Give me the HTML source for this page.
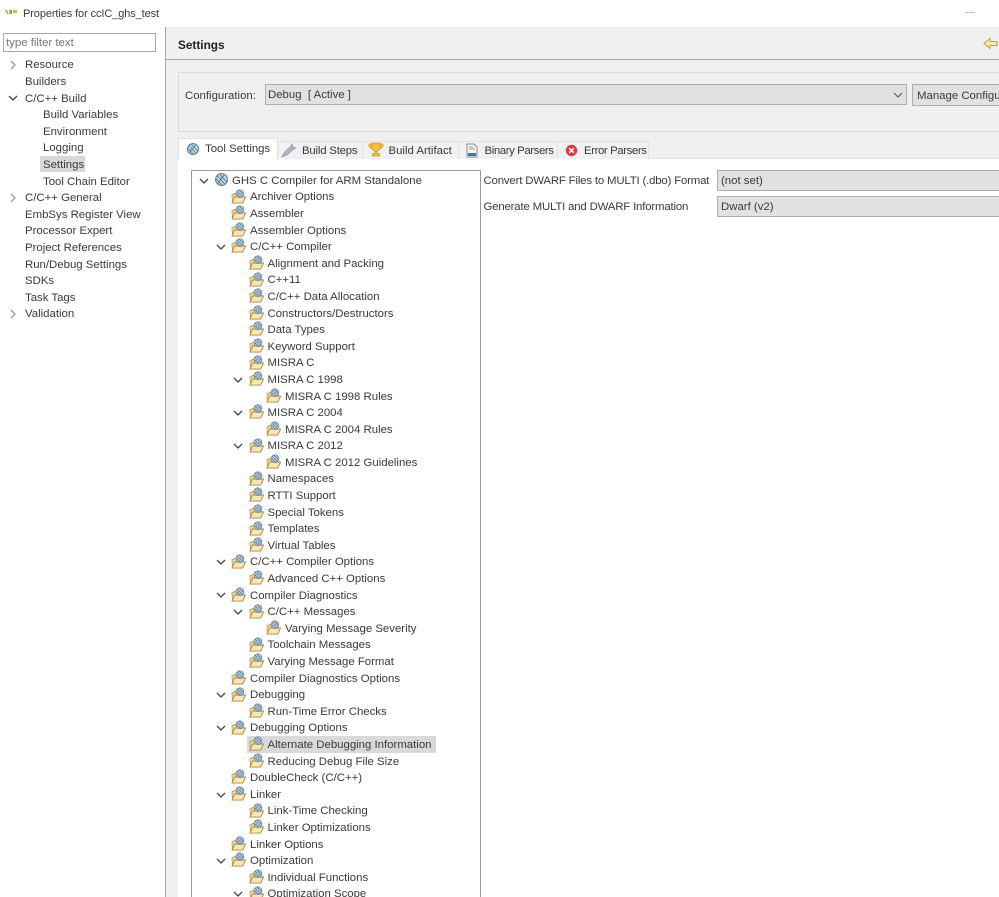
<!DOCTYPE html>
<html><head><meta charset="utf-8"><title>Properties for ccIC_ghs_test</title>
<style>
html,body{margin:0;padding:0;width:999px;height:897px;overflow:hidden;background:#fff}
body{position:relative;font:11.4px/16.6px "Liberation Sans","Noto Sans CJK KR",sans-serif;color:#3a3a3a}
.a{position:absolute;white-space:nowrap}
.tree{position:absolute;left:192px;top:172.1px;width:288px;height:726px;overflow:hidden}
.r{position:relative;height:16.6px;white-space:nowrap}
.r svg{position:absolute}
.r svg.i{top:0;width:15px;height:15px}
.r svg.c{top:3.500px;width:10px;height:10px}
.r span{position:absolute;top:.7px}
.l0 svg.c{left:7px}.l0 svg.i{left:22px}.l0 span{left:40px}
.l1 svg.c{left:24px}.l1 svg.i{left:39px}.l1 span{left:58px}
.l2 svg.c{left:41px}.l2 svg.i{left:57px}.l2 span{left:75.5px}
.l3 svg.i{left:74px}.l3 span{left:93px}
.sel{position:absolute;left:247px;top:736px;width:189px;height:17px;background:#d9d9d9}
.left{position:absolute;left:0;top:56.800px;width:165px}
.left div{position:relative;height:16.6px;white-space:nowrap}
.left span{position:absolute;top:.6px}
.left .t1 span{left:25px}.left .t2 span{left:43px}
.left svg{position:absolute;left:8px;top:3.500px;width:10px;height:10px}
.tab{position:absolute;top:141px;height:17px;background:#f1f1f1;border:1px solid #e3e3e3;border-bottom:0;line-height:17px;white-space:nowrap}
.tab svg{position:absolute;top:0}
.tab span{position:absolute;top:1px}
.combo{position:absolute;background:#e1e1e1;border:1px solid #adadad;box-sizing:border-box;line-height:21px;white-space:nowrap;overflow:hidden}
</style></head><body>
<svg width="0" height="0" style="position:absolute"><defs>
<symbol id="f" viewBox="0 0 16 16">
<path d="M1 6h1.500l1-1.500H7V14H1.500z" fill="#efd596" stroke="#b8954a" stroke-width=".8"/>
<path d="M1 15l3-6.500h11.500l-3 6.500z" fill="#f9e6b4" stroke="#ad8a42" stroke-width="1"/>
<circle cx="9.500" cy="5" r="4.200" fill="#c7d3dc" stroke="#6f8ea5" stroke-width=".9"/>
<path d="M6.500 2.500l6 5.500M6 5l4.500 4M8.500 1l4.500 4.500" stroke="#54758e" stroke-width=".9" fill="none"/>
</symbol>
<symbol id="g" viewBox="0 0 16 16">
<circle cx="8" cy="8" r="6.300" fill="#cbd8e2" stroke="#5f859f" stroke-width="1.200"/>
<path d="M3.500 4l8 9M6 2.500l8 8.500M2.500 7.500l6 6.500M11 3l-7 9" stroke="#4f708a" stroke-width=".9" fill="none"/>
</symbol>
<symbol id="d" viewBox="0 0 10 10"><path d="M1 3l4 4 4-4" fill="none" stroke="#444" stroke-width="1.300"/></symbol>
<symbol id="n" viewBox="0 0 10 10"><path d="M3 1l4 4-4 4" fill="none" stroke="#999" stroke-width="1.300"/></symbol>
</defs></svg>

<!-- title bar -->
<svg class="a" style="left:5px;top:9px" width="12" height="6" viewBox="0 0 12 6"><path d="M0 1h2l2 4H2z" fill="#d8a82a"/><path d="M4 1h3v4H5z" fill="#8a9a70"/><path d="M8 1h4v3H8z" fill="#c2c23a"/></svg>
<div class="a" style="left:23px;top:6px;font-size:11px;letter-spacing:-.1px">Properties for ccIC_ghs_test</div>
<div class="a" style="left:965px;top:12px;width:10px;height:1px;background:#bbb"></div>

<!-- right panel backgrounds -->
<div class="a" style="left:165px;top:27px;width:834px;height:870px;background:#f0f0f0"></div>
<div class="a" style="left:165px;top:27px;width:1px;height:870px;background:#a6a6a6"></div>
<div class="a" style="left:166px;top:59px;width:833px;height:1px;background:#a8a8a8"></div>
<div class="a" style="left:178px;top:72px;width:821px;height:60px;border:1px solid #dcdcdc;border-right:0;box-sizing:border-box"></div>
<div class="a" style="left:178px;top:158px;width:821px;height:739px;background:#fff"></div>
<div class="a" style="left:178px;top:158px;width:821px;height:1px;background:#e3e3e3"></div>

<b class="a" style="left:178px;top:37px;color:#222;font-size:11.8px">Settings</b>
<svg class="a" style="left:983px;top:37px" width="15" height="13" viewBox="0 0 15 13"><path d="M1 6.500L7 1.500v3h7v4H7v3z" fill="#fbeeb0" stroke="#c8a040" stroke-width="1.100"/></svg>

<!-- configuration -->
<div class="a" style="left:185px;top:88px">Configuration:</div>
<div class="combo" style="left:265px;top:84px;width:642px;height:21px;padding-left:2px">Debug &nbsp;[ Active ]
<svg style="position:absolute;right:3px;top:5px" width="10" height="10" viewBox="0 0 10 10"><path d="M1 3l4 4 4-4" fill="none" stroke="#555" stroke-width="1"/></svg></div>
<div class="combo" style="left:912px;top:84px;width:100px;height:22px;padding-left:4px;line-height:22px">Manage Configurations</div>

<!-- tabs -->
<div class="tab" style="left:178px;top:138px;width:98px;height:21px;background:#fff;border-color:#e3e3e3;line-height:20px;z-index:2">
<svg style="left:7px;top:3px" width="14" height="14"><use href="#g"/></svg><span style="left:26px;top:0">Tool Settings</span></div>
<div class="tab" style="left:277px;width:84px">
<svg style="left:3px;top:1px" width="16" height="15" viewBox="0 0 16 15"><path d="M1 14l2-4 3-3 4-4 1-2 1 3 3 1-2 1-4 3-3 3z" fill="#a9b8c4" stroke="#7b8b98" stroke-width=".6"/></svg><span style="left:24px;letter-spacing:-.2px">Build Steps</span></div>
<div class="tab" style="left:362px;width:95px">
<svg style="left:5px;top:0" width="16" height="15" viewBox="0 0 16 15"><path d="M4 1h8v5c0 2-2 3.500-4 3.500S4 8 4 6zM7 9h2v2.500h2.500V14h-7v-2.500H7zM4 2H1v2c0 1.500 1.500 2.500 3 2.500M12 2h3v2c0 1.500-1.500 2.500-3 2.500" fill="#f2bf45" stroke="#d09a20" stroke-width=".7"/></svg><span style="left:25.5px">Build Artifact</span></div>
<div class="tab" style="left:458px;width:98px">
<svg style="left:6px;top:1px" width="14" height="15" viewBox="0 0 14 15"><path d="M2 1h7l3 3v10H2z" fill="#f5f5f5" stroke="#8a8a8a"/><path d="M3 10h8v3H3z" fill="#3f6ea0"/><path d="M4 4h4M4 6h6" stroke="#999"/></svg><span style="left:25.500px;letter-spacing:-.4px">Binary Parsers</span></div>
<div class="tab" style="left:557px;width:90px">
<svg style="left:7px;top:2px" width="13" height="13" viewBox="0 0 13 13"><circle cx="6.500" cy="6.500" r="5.700" fill="#e2394a"/><path d="M4.300 4.300l4.400 4.400M8.700 4.300l-4.400 4.400" stroke="#fff" stroke-width="1.600"/></svg><span style="left:26px;letter-spacing:-.4px">Error Parsers</span></div>

<!-- settings fields -->
<div class="a" style="left:483.500px;top:173px;letter-spacing:-.17px">Convert DWARF Files to MULTI (.dbo) Format</div>
<div class="a" style="left:483.500px;top:199px;letter-spacing:-.17px">Generate MULTI and DWARF Information</div>
<div class="combo" style="left:717px;top:170px;width:290px;height:21px;padding-left:3px">(not set)</div>
<div class="combo" style="left:717px;top:196px;width:290px;height:21px;padding-left:3px">Dwarf (v2)</div>

<!-- left nav -->
<div class="a" style="left:3px;top:33px;width:153px;height:19px;border:1px solid #a8a8a8;box-sizing:border-box;padding-left:2px;line-height:18px;color:#777">type filter text</div>
<div class="a" style="left:40px;top:156px;width:45px;height:16px;background:#d9d9d9"></div>
<div class="left">
<div class="t1"><svg><use href="#n"/></svg><span>Resource</span></div>
<div class="t1"><span>Builders</span></div>
<div class="t1"><svg><use href="#d"/></svg><span>C/C++ Build</span></div>
<div class="t2"><span>Build Variables</span></div>
<div class="t2"><span>Environment</span></div>
<div class="t2"><span>Logging</span></div>
<div class="t2"><span>Settings</span></div>
<div class="t2"><span>Tool Chain Editor</span></div>
<div class="t1"><svg><use href="#n"/></svg><span>C/C++ General</span></div>
<div class="t1"><span>EmbSys Register View</span></div>
<div class="t1"><span>Processor Expert</span></div>
<div class="t1"><span>Project References</span></div>
<div class="t1"><span>Run/Debug Settings</span></div>
<div class="t1"><span>SDKs</span></div>
<div class="t1"><span>Task Tags</span></div>
<div class="t1"><svg><use href="#n"/></svg><span>Validation</span></div>
</div>

<!-- tool tree -->
<div class="a" style="left:191px;top:170px;width:290px;height:740px;border:1px solid #9a9a9a;box-sizing:border-box;background:#fff"></div>
<div class="sel"></div>
<div class="tree">
<div class="r l0"><svg class="c"><use href="#d"/></svg><svg class="i"><use href="#g"/></svg><span>GHS C Compiler for ARM Standalone</span></div>
<div class="r l1"><svg class="i"><use href="#f"/></svg><span>Archiver Options</span></div>
<div class="r l1"><svg class="i"><use href="#f"/></svg><span>Assembler</span></div>
<div class="r l1"><svg class="i"><use href="#f"/></svg><span>Assembler Options</span></div>
<div class="r l1"><svg class="c"><use href="#d"/></svg><svg class="i"><use href="#f"/></svg><span>C/C++ Compiler</span></div>
<div class="r l2"><svg class="i"><use href="#f"/></svg><span>Alignment and Packing</span></div>
<div class="r l2"><svg class="i"><use href="#f"/></svg><span>C++11</span></div>
<div class="r l2"><svg class="i"><use href="#f"/></svg><span>C/C++ Data Allocation</span></div>
<div class="r l2"><svg class="i"><use href="#f"/></svg><span>Constructors/Destructors</span></div>
<div class="r l2"><svg class="i"><use href="#f"/></svg><span>Data Types</span></div>
<div class="r l2"><svg class="i"><use href="#f"/></svg><span>Keyword Support</span></div>
<div class="r l2"><svg class="i"><use href="#f"/></svg><span>MISRA C</span></div>
<div class="r l2"><svg class="c"><use href="#d"/></svg><svg class="i"><use href="#f"/></svg><span>MISRA C 1998</span></div>
<div class="r l3"><svg class="i"><use href="#f"/></svg><span>MISRA C 1998 Rules</span></div>
<div class="r l2"><svg class="c"><use href="#d"/></svg><svg class="i"><use href="#f"/></svg><span>MISRA C 2004</span></div>
<div class="r l3"><svg class="i"><use href="#f"/></svg><span>MISRA C 2004 Rules</span></div>
<div class="r l2"><svg class="c"><use href="#d"/></svg><svg class="i"><use href="#f"/></svg><span>MISRA C 2012</span></div>
<div class="r l3"><svg class="i"><use href="#f"/></svg><span>MISRA C 2012 Guidelines</span></div>
<div class="r l2"><svg class="i"><use href="#f"/></svg><span>Namespaces</span></div>
<div class="r l2"><svg class="i"><use href="#f"/></svg><span>RTTI Support</span></div>
<div class="r l2"><svg class="i"><use href="#f"/></svg><span>Special Tokens</span></div>
<div class="r l2"><svg class="i"><use href="#f"/></svg><span>Templates</span></div>
<div class="r l2"><svg class="i"><use href="#f"/></svg><span>Virtual Tables</span></div>
<div class="r l1"><svg class="c"><use href="#d"/></svg><svg class="i"><use href="#f"/></svg><span>C/C++ Compiler Options</span></div>
<div class="r l2"><svg class="i"><use href="#f"/></svg><span>Advanced C++ Options</span></div>
<div class="r l1"><svg class="c"><use href="#d"/></svg><svg class="i"><use href="#f"/></svg><span>Compiler Diagnostics</span></div>
<div class="r l2"><svg class="c"><use href="#d"/></svg><svg class="i"><use href="#f"/></svg><span>C/C++ Messages</span></div>
<div class="r l3"><svg class="i"><use href="#f"/></svg><span>Varying Message Severity</span></div>
<div class="r l2"><svg class="i"><use href="#f"/></svg><span>Toolchain Messages</span></div>
<div class="r l2"><svg class="i"><use href="#f"/></svg><span>Varying Message Format</span></div>
<div class="r l1"><svg class="i"><use href="#f"/></svg><span>Compiler Diagnostics Options</span></div>
<div class="r l1"><svg class="c"><use href="#d"/></svg><svg class="i"><use href="#f"/></svg><span>Debugging</span></div>
<div class="r l2"><svg class="i"><use href="#f"/></svg><span>Run-Time Error Checks</span></div>
<div class="r l1"><svg class="c"><use href="#d"/></svg><svg class="i"><use href="#f"/></svg><span>Debugging Options</span></div>
<div class="r l2"><svg class="i"><use href="#f"/></svg><span>Alternate Debugging Information</span></div>
<div class="r l2"><svg class="i"><use href="#f"/></svg><span>Reducing Debug File Size</span></div>
<div class="r l1"><svg class="i"><use href="#f"/></svg><span>DoubleCheck (C/C++)</span></div>
<div class="r l1"><svg class="c"><use href="#d"/></svg><svg class="i"><use href="#f"/></svg><span>Linker</span></div>
<div class="r l2"><svg class="i"><use href="#f"/></svg><span>Link-Time Checking</span></div>
<div class="r l2"><svg class="i"><use href="#f"/></svg><span>Linker Optimizations</span></div>
<div class="r l1"><svg class="i"><use href="#f"/></svg><span>Linker Options</span></div>
<div class="r l1"><svg class="c"><use href="#d"/></svg><svg class="i"><use href="#f"/></svg><span>Optimization</span></div>
<div class="r l2"><svg class="i"><use href="#f"/></svg><span>Individual Functions</span></div>
<div class="r l2"><svg class="c"><use href="#d"/></svg><svg class="i"><use href="#f"/></svg><span>Optimization Scope</span></div>
</div>
</body></html>
